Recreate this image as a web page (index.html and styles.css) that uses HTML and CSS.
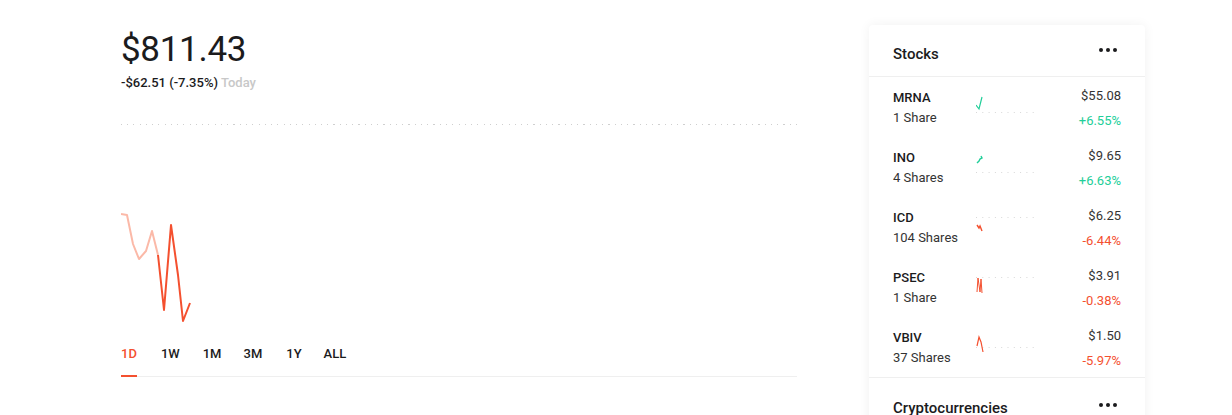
FILE: index.html
```html
<!DOCTYPE html>
<html>
<head>
<meta charset="utf-8">
<link rel="stylesheet" href="styles.css">
</head>
<body>
<div class="page">
  <section class="main">
    <div class="price">$811.43</div>
    <div class="change">-$62.51 (-7.35%) <span class="today">Today</span></div>
    <div class="chart">
      <div class="baseline"></div>
      <svg class="chart-svg" width="676" height="250" viewBox="0 0 676 250">
        <polyline points="0,123 6,124 12,153 18,168 25,160 31,140 37,164" fill="none" stroke="#fbb9a8" stroke-width="2" stroke-linejoin="round"/>
        <polyline points="37,164 43,219 50,134 57,184 62,230 69,212" fill="none" stroke="#f4502f" stroke-width="2" stroke-linejoin="round"/>
      </svg>
    </div>
    <nav class="tabs">
      <span class="tab active">1D</span>
      <span class="tab">1W</span>
      <span class="tab">1M</span>
      <span class="tab">3M</span>
      <span class="tab">1Y</span>
      <span class="tab">ALL</span>
    </nav>
  </section>
  <aside class="card">
    <header class="card-head">
      <span class="card-title">Stocks</span>
      <span class="more"><i></i><i></i><i></i></span>
    </header>
    <div class="rows">
      <div class="row">
        <div class="name"><div class="sym">MRNA</div><div class="qty">1 Share</div></div>
        <svg class="spark" width="58" height="40" viewBox="0 0 58 40"><line class="dots" x1="0" y1="25.5" x2="58" y2="25.5"/><polyline points="0,18 3,22 6,10" fill="none" stroke="#21ce99" stroke-width="1.2"/></svg>
        <div class="vals"><div class="val">$55.08</div><div class="pct up">+6.55%</div></div>
      </div>
      <div class="row">
        <div class="name"><div class="sym">INO</div><div class="qty">4 Shares</div></div>
        <svg class="spark" width="58" height="40" viewBox="0 0 58 40"><line class="dots" x1="0" y1="25.5" x2="58" y2="25.5"/><polyline points="1,16 3,14 4,12 6,11 5,9" fill="none" stroke="#21ce99" stroke-width="1.4"/></svg>
        <div class="vals"><div class="val">$9.65</div><div class="pct up">+6.63%</div></div>
      </div>
      <div class="row">
        <div class="name"><div class="sym">ICD</div><div class="qty">104 Shares</div></div>
        <svg class="spark" width="58" height="40" viewBox="0 0 58 40"><line class="dots" x1="0" y1="10.5" x2="58" y2="10.5"/><polyline points="1,18 3,21 4,19 6,24" fill="none" stroke="#f4502f" stroke-width="1.4"/></svg>
        <div class="vals"><div class="val">$6.25</div><div class="pct down">-6.44%</div></div>
      </div>
      <div class="row">
        <div class="name"><div class="sym">PSEC</div><div class="qty">1 Share</div></div>
        <svg class="spark" width="58" height="40" viewBox="0 0 58 40"><line class="dots" x1="0" y1="10.5" x2="58" y2="10.5"/><polyline points="1,25 2,11 4,25 5,12 6,26" fill="none" stroke="#f4502f" stroke-width="1"/></svg>
        <div class="vals"><div class="val">$3.91</div><div class="pct down">-0.38%</div></div>
      </div>
      <div class="row">
        <div class="name"><div class="sym">VBIV</div><div class="qty">37 Shares</div></div>
        <svg class="spark" width="58" height="40" viewBox="0 0 58 40"><line class="dots" x1="0" y1="20.5" x2="58" y2="20.5"/><polyline points="1,19 3,10 5,15 7,25" fill="none" stroke="#f4502f" stroke-width="1.2"/></svg>
        <div class="vals"><div class="val">$1.50</div><div class="pct down">-5.97%</div></div>
      </div>
    </div>
    <header class="card-head crypto">
      <span class="card-title">Cryptocurrencies</span>
      <span class="more"><i></i><i></i><i></i></span>
    </header>
  </aside>
</div>
</body>
</html>
```

FILE: styles.css
```css
* { box-sizing: border-box; }
html, body { margin: 0; padding: 0; background: #fff; }
body {
  font-family: Roboto, "Liberation Sans", sans-serif;
  color: #1b1b1d;
  overflow: hidden;
  height: 415px;
}
.page {
  display: flex;
  align-items: flex-start;
  padding-left: 121px;
}
.main {
  width: 676px;
  padding-top: 28px;
}
.price {
  font-size: 35px;
  line-height: 44px;
  font-weight: 400;
  letter-spacing: -0.3px;
}
.change {
  margin-top: 3px;
  font-size: 13px;
  line-height: 16px;
  font-weight: 500;
}
.today { color: #c8c8c8; font-weight: 500; }
.chart {
  position: relative;
  height: 250px;
}
.baseline {
  position: absolute;
  left: 0; right: 0; top: 33px;
  height: 1px;
  background: repeating-linear-gradient(to right, #cfcfcf 0 1px, transparent 1px 6.25px);
}
.chart-svg { display: block; position: absolute; left: 0; top: 0; }
.tabs {
  display: flex;
  border-bottom: 1px solid #efefef;
  padding-top: 3px;
}
.tab {
  font-size: 13px;
  line-height: 20px;
  font-weight: 500;
  padding-bottom: 11px;
  border-bottom: 2px solid transparent;
  margin-bottom: -1px;
  margin-right: 24px;
}
.tab:nth-child(2) { margin-right: 23px; }
.tab:nth-child(3) { margin-right: 22px; }
.tab:nth-child(4) { margin-right: 24px; }
.tab:nth-child(5) { margin-right: 22px; }
.tab.active { color: #f4502f; border-bottom-color: #f4502f; }

.card {
  margin-left: 72px;
  margin-top: 25px;
  width: 276px;
  background: #fff;
  border-radius: 4px;
  box-shadow: 0 0 12px rgba(0,0,0,0.06);
}
.card-head {
  display: flex;
  justify-content: space-between;
  align-items: center;
  height: 52px;
  padding: 6px 28px 0 24px;
  border-bottom: 1px solid #efefef;
}
.card-head.crypto { border-bottom: none; height: 60px; padding-top: 0; }
.card-title { font-size: 15px; font-weight: 500; }
.more { display: flex; gap: 3px; margin-top: -8px; }
.crypto .more { margin-top: -6px; }
.more i { width: 4px; height: 4px; border-radius: 50%; background: #1b1b1d; display: block; }
.rows { border-bottom: 1px solid #efefef; }
.row {
  display: flex;
  align-items: center;
  height: 60px;
  padding: 0 24px;
}
.name { width: 83px; font-size: 13px; line-height: 20px; padding-top: 1px; }
.sym { font-weight: 500; }
.qty { color: #333; }
.spark { display: block; flex: none; }
.dots { stroke: #d8d8d8; stroke-width: 1; stroke-dasharray: 1 5.3; }
.vals { flex: 1; text-align: right; font-size: 13px; padding-top: 8px; }
.val { line-height: 20px; color: #333; }
.pct { line-height: 30px; }
.up { color: #21ce99; }
.down { color: #f4502f; }
```
